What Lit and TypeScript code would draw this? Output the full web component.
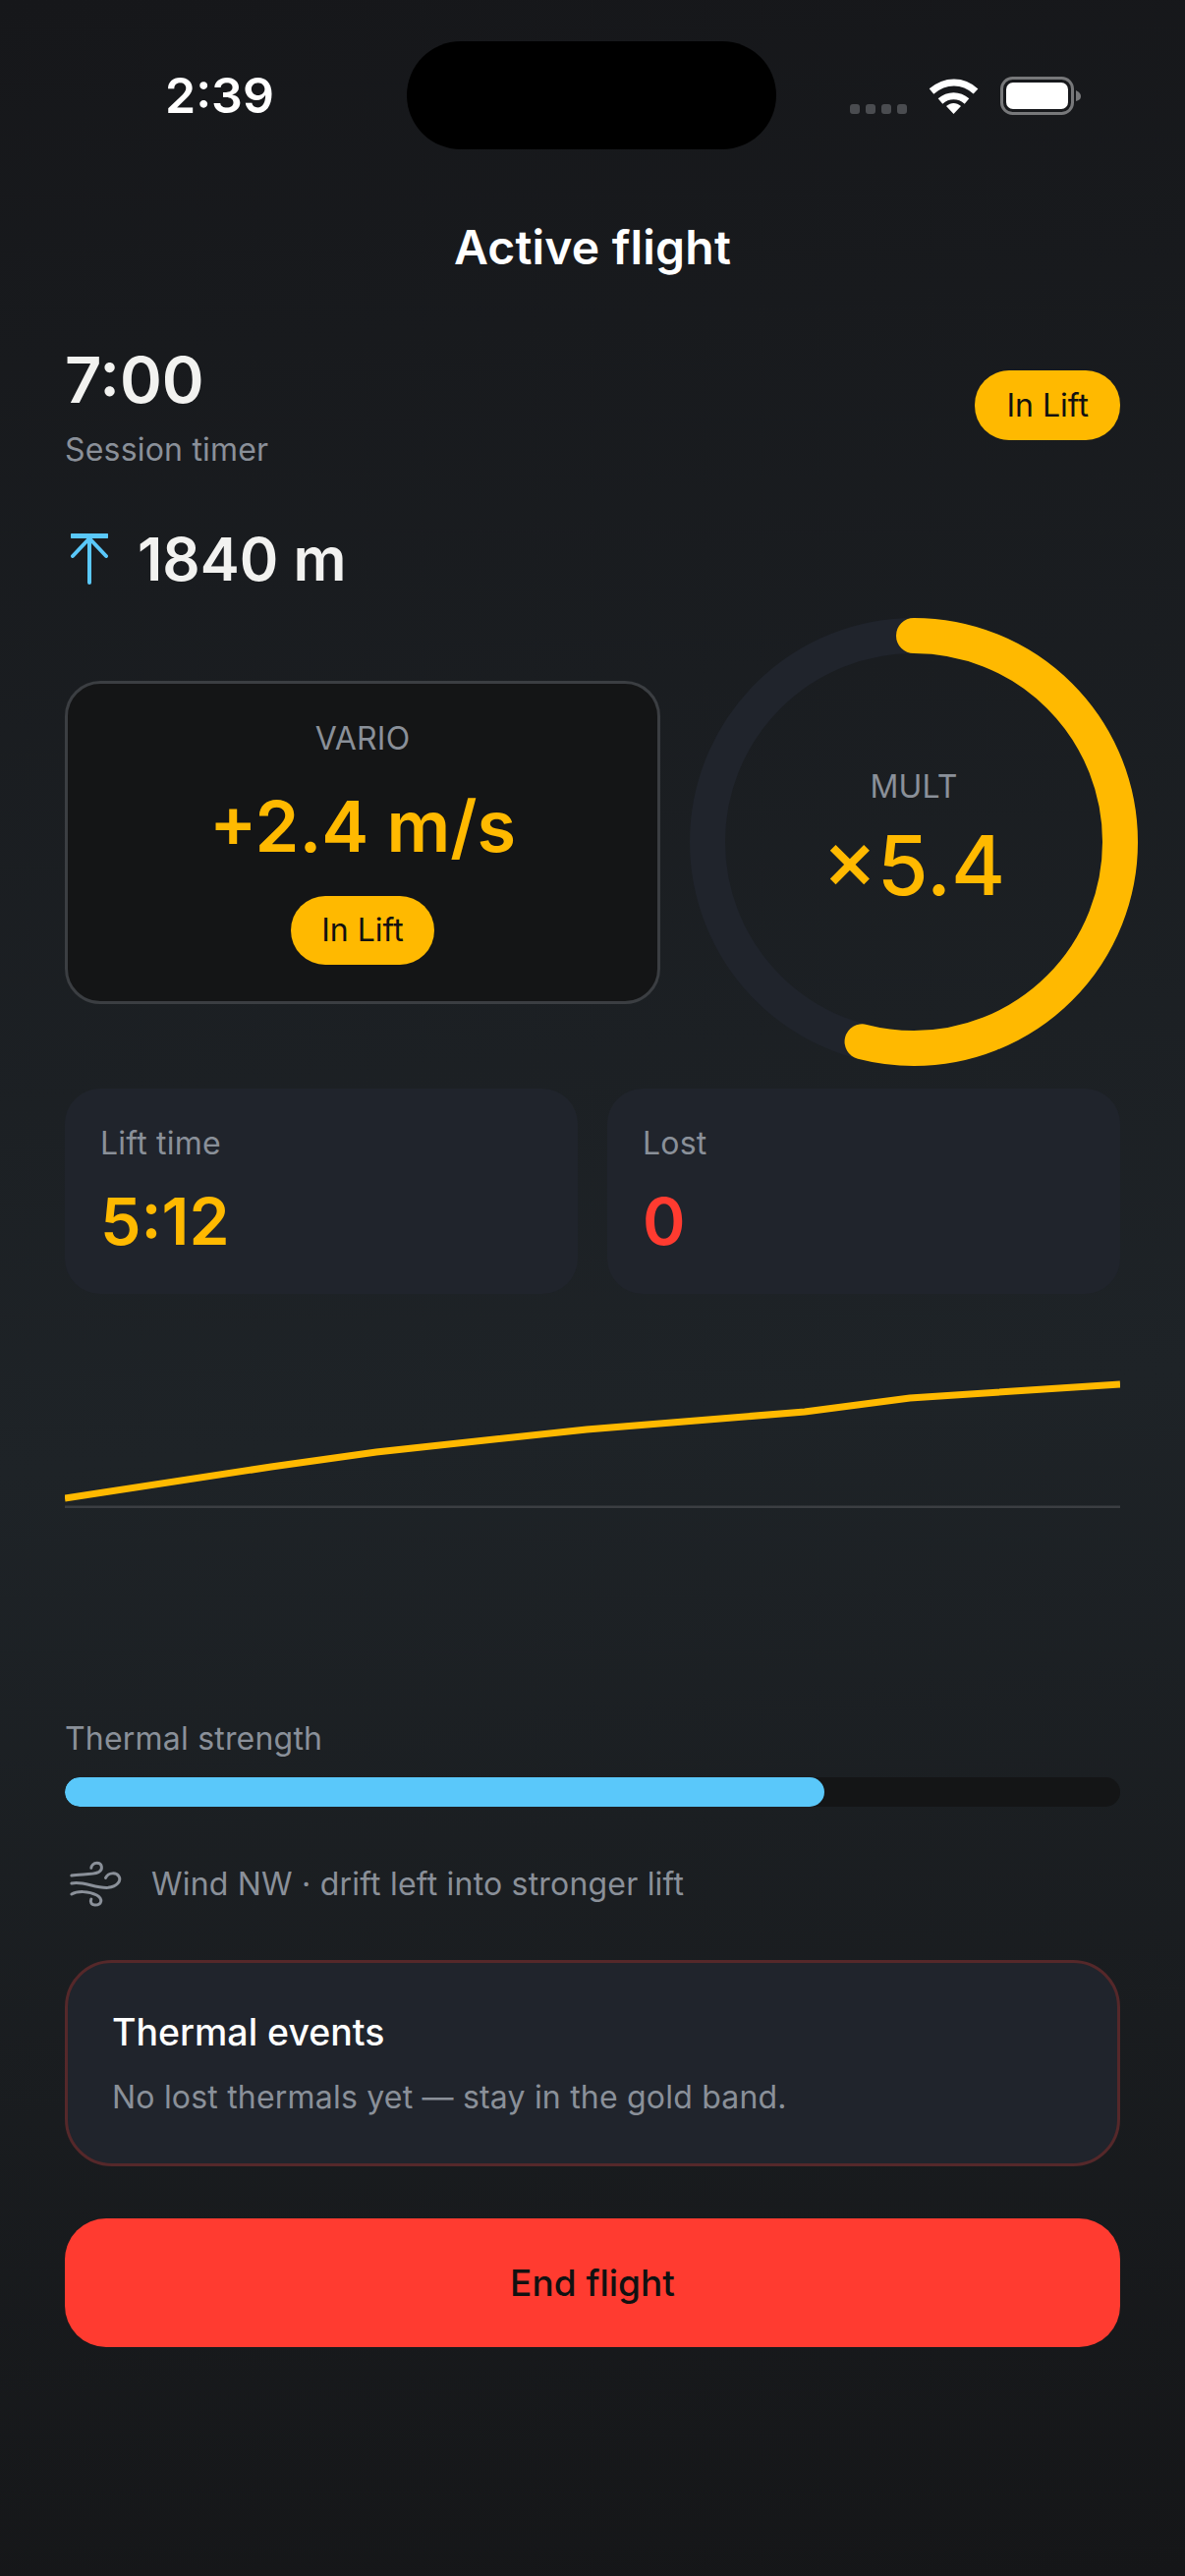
import { css, html, LitElement, svg } from "lit";
import { customElement } from "lit/decorators.js";

const GOLD = "#ffb900";

// altitude trace, in the chart box's own coordinates
const TRACE: [number, number][] = [
	[0, 116],
	[210, 84],
	[317, 69],
	[531, 46],
	[753, 28],
	[860, 14],
	[1074, 0],
];

const RING_RADIUS = 210;
const RING_VALUE = 0.54;

@customElement("app-root")
export class AppRoot extends LitElement {
	static override styles = css`
		:host {
			display: block;
			width: 1206px;
			height: 2622px;
			overflow: hidden;
			font-family: Inter, "Liberation Sans", sans-serif;
			color: #fff;
			background: linear-gradient(175deg, #16171a 0%, #1e2327 55%, #151618 100%);
		}

		.status {
			position: relative;
			height: 194px;
		}
		.time {
			position: absolute;
			left: 168px;
			top: 66px;
			font-size: 50px;
			line-height: 62px;
			font-weight: 600;
		}
		.island {
			position: absolute;
			left: 414px;
			top: 42px;
			width: 376px;
			height: 110px;
			border-radius: 55px;
			background: #000;
		}
		.status-icons {
			position: absolute;
			left: 860px;
			top: 74px;
		}

		h1 {
			margin: 0;
			height: 116px;
			text-align: center;
			font-size: 48px;
			line-height: 116px;
			font-weight: 600;
			letter-spacing: 0.2px;
		}

		main {
			padding: 0 66px;
		}

		.head {
			display: flex;
			justify-content: space-between;
			align-items: center;
			margin-top: 41px;
		}
		.head .pill {
			height: 71px;
			line-height: 71px;
			margin-top: -4px;
			padding: 0 32px;
		}
		.clock {
			margin-bottom: 15px;
			font-size: 65px;
			line-height: 72px;
			font-weight: 600;
			color: #f2f2f0;
		}
		.muted {
			font-size: 32px;
			line-height: 40px;
			letter-spacing: 0.2px;
			color: #8a9099;
		}
		.pill {
			display: inline-block;
			padding: 0 31px;
			height: 70px;
			line-height: 70px;
			border-radius: 35px;
			background: #ffb900;
			color: #111;
			font-size: 32px;
		}

		.alt {
			display: flex;
			align-items: center;
			gap: 30px;
			margin-top: 53px;
			padding-left: 6px;
			font-size: 60px;
			line-height: 76px;
			font-weight: 600;
			color: #f2f2f0;
		}

		.gauges {
			display: flex;
			align-items: center;
			gap: 30px;
			margin-top: 22px;
			margin-right: -18px;
		}
		.vario {
			box-sizing: border-box;
			width: 606px;
			height: 329px;
			padding-top: 36px;
			border: 3px solid #3b3e42;
			border-radius: 36px;
			background: #141516;
			text-align: center;
		}
		.vario .reading {
			margin: 24px 0 26px;
			font-size: 72px;
			line-height: 90px;
			font-weight: 600;
			color: #ffb900;
		}
		.ring {
			position: relative;
			width: 456px;
			height: 456px;
		}
		.ring svg {
			display: block;
		}
		.ring-label {
			position: absolute;
			inset: 0;
			display: flex;
			flex-direction: column;
			align-items: center;
			justify-content: center;
		}
		.ring-label .muted {
			margin-top: -2px;
		}
		.ring-label .reading {
			margin-top: 10px;
			font-size: 84px;
			line-height: 100px;
			font-weight: 500;
			color: #ffb900;
		}

		.stats {
			display: grid;
			grid-template-columns: 1fr 1fr;
			gap: 30px;
			margin-top: 23px;
		}
		.stat {
			height: 209px;
			box-sizing: border-box;
			padding: 36px 36px 0;
			border-radius: 36px;
			background: #20242c;
		}
		.stat .value {
			margin-top: 19px;
			font-size: 66px;
			line-height: 80px;
			font-weight: 600;
		}
		.gold {
			color: #ffb900;
		}
		.red {
			color: #ff3b30;
		}

		.chart {
			display: block;
			margin-top: 88px;
		}

		.thermal {
			margin-top: 215px;
		}
		.bar {
			height: 30px;
			margin-top: 19px;
			border-radius: 15px;
			background: #141516;
			overflow: hidden;
		}
		.bar div {
			height: 100%;
			border-radius: 15px;
			background: #5ac8fa;
		}

		.wind {
			display: flex;
			align-items: center;
			gap: 27px;
			margin-top: 54px;
			padding-left: 4px;
		}

		.events {
			box-sizing: border-box;
			height: 210px;
			margin-top: 52px;
			padding: 48px 45px 0;
			border: 3px solid #55282a;
			border-radius: 48px;
			background: #20242c;
		}
		.events h2 {
			margin: 0 0 23px;
			font-size: 37.5px;
			line-height: 46px;
			font-weight: 500;
		}

		.end {
			display: block;
			width: 100%;
			height: 131px;
			margin-top: 53px;
			border: 0;
			border-radius: 42px;
			background: #ff3b30;
			color: #111;
			font: 500 37px Inter, "Liberation Sans", sans-serif;
		}
	`;

	private statusIcons() {
		return html`<svg width="245" height="50" viewBox="860 74 245 50">
			${[865, 881, 897, 913].map(
				(x) => svg`<rect x=${x} y="106" width="10" height="10" rx="3" fill="#4a4c50" />`,
			)}
			<path d="M948 93 C962 81 980 81 993 93" fill="none" stroke="#fff" stroke-width="7" />
			<path d="M957 103 C965 96 976 96 984 103" fill="none" stroke="#fff" stroke-width="7" />
			<path d="M963 108 C968 104 973 104 978 108 L970.5 116 Z" fill="#fff" />
			<rect x="1019.5" y="79.5" width="72" height="36" rx="11" fill="none" stroke="#77787a" stroke-width="3" />
			<rect x="1024" y="84" width="63" height="27" rx="7" fill="#fff" />
			<path d="M1095 92 C1099 94 1100 96 1100 98 C1100 100 1099 102 1095 103 Z" fill="#77787a" />
		</svg>`;
	}

	private ring() {
		const circ = 2 * Math.PI * RING_RADIUS;
		return html`<div class="ring">
			<svg width="456" height="456" viewBox="0 0 456 456">
				<circle cx="228" cy="228" r=${RING_RADIUS} fill="none" stroke="#20242c" stroke-width="36" />
				<circle
					cx="228"
					cy="228"
					r=${RING_RADIUS}
					fill="none"
					stroke=${GOLD}
					stroke-width="36"
					stroke-linecap="round"
					stroke-dasharray="${circ * RING_VALUE} ${circ}"
					transform="rotate(-90 228 228)"
				/>
			</svg>
			<div class="ring-label">
				<div class="muted">MULT</div>
				<div class="reading">×5.4</div>
			</div>
		</div>`;
	}

	private chart() {
		const pts = TRACE.map(([x, y]) => `${x},${y + 4}`).join(" ");
		return html`<svg class="chart" width="1074" height="130" viewBox="0 0 1074 130">
			<line x1="0" y1="129" x2="1074" y2="129" stroke="#3b3e42" stroke-width="3" />
			<polyline points=${pts} fill="none" stroke=${GOLD} stroke-width="7" />
		</svg>`;
	}

	override render() {
		return html`
			<div class="status">
				<div class="time">2:39</div>
				<div class="island"></div>
				<div class="status-icons">${this.statusIcons()}</div>
			</div>
			<h1>Active flight</h1>
			<main>
				<div class="head">
					<div>
						<div class="clock">7:00</div>
						<div class="muted">Session timer</div>
					</div>
					<span class="pill">In Lift</span>
				</div>
				<div class="alt">
					<svg width="38" height="52" viewBox="0 0 38 52" fill="none" stroke="#5ac8fa" stroke-width="4" stroke-linecap="round" stroke-linejoin="round">
						<path d="M1 2.5H37" stroke-width="5" />
						<path d="M19 5V50M2 23L19 5L36 23" />
					</svg>
					1840 m
				</div>
				<div class="gauges">
					<div class="vario">
						<div class="muted">VARIO</div>
						<div class="reading">+2.4 m/s</div>
						<span class="pill">In Lift</span>
					</div>
					${this.ring()}
				</div>
				<div class="stats">
					<div class="stat">
						<div class="muted">Lift time</div>
						<div class="value gold">5:12</div>
					</div>
					<div class="stat">
						<div class="muted">Lost</div>
						<div class="value red">0</div>
					</div>
				</div>
				${this.chart()}
				<div class="thermal">
					<div class="muted">Thermal strength</div>
					<div class="bar"><div style="width: 72%"></div></div>
				</div>
				<div class="wind">
					<svg width="57" height="50" viewBox="60 40 170 150" fill="none" stroke="#8a9099" stroke-width="9" stroke-linecap="round">
						<path d="M68 88C90 82 130 88 150 78C165 70 162 50 145 50C135 50 128 58 128 65" />
						<path d="M68 112C100 102 140 128 180 125C205 122 222 105 212 90C205 78 180 78 172 95" />
						<path d="M68 145C85 135 120 135 145 148C165 160 160 178 140 178C128 178 124 168 128 160" />
					</svg>
					<span class="muted">Wind NW · drift left into stronger lift</span>
				</div>
				<div class="events">
					<h2>Thermal events</h2>
					<div class="muted">No lost thermals yet — stay in the gold band.</div>
				</div>
				<button class="end">End flight</button>
			</main>
		`;
	}
}
